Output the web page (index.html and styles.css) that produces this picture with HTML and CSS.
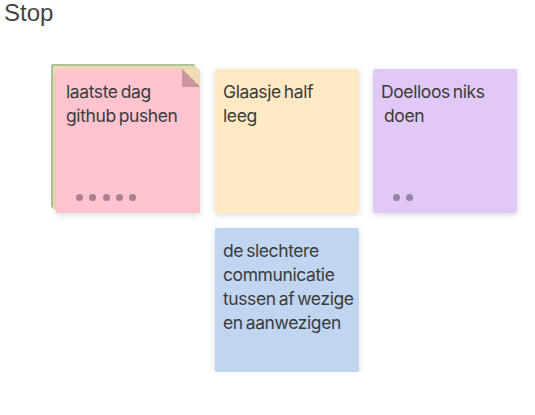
FILE: index.html
```html
<!DOCTYPE html>
<html lang="en">
<head>
    <meta charset="UTF-8">
    <meta name="viewport" content="width=device-width, initial-scale=1.0">
    <title>Retro - Stop</title>
    <link rel="stylesheet" href="styles.css">
</head>
<body>
    <h1 class="column-title">Stop</h1>
    <div class="board">
        <!-- stacked note: several votes merged into one -->
        <div class="note-stack cell-1">
            <div class="layer layer-green"></div>
            <div class="layer layer-beige"></div>
            <div class="note note-pink folded">
                <p>laatste dag<br>github pushen</p>
                <div class="votes">
                    <span></span><span></span><span></span><span></span><span></span>
                </div>
            </div>
        </div>
        <div class="note note-yellow cell-2">
            <p>Glaasje half<br>leeg</p>
        </div>
        <div class="note note-purple cell-3">
            <p>Doelloos niks<br>&nbsp;doen</p>
            <div class="votes">
                <span></span><span></span>
            </div>
        </div>
        <div class="note note-blue cell-5">
            <p>de slechtere<br>communicatie<br>tussen af wezige<br>en aanwezigen</p>
        </div>
    </div>
</body>
</html>
```

FILE: styles.css
```css
body {
    margin: 0;
    padding: 0;
    background: #fff;
    font-family: Inter, "Liberation Sans", sans-serif;
}

.column-title {
    margin: 0;
    padding: 0 0 0 4px;
    font-family: "Liberation Sans", Arial, sans-serif;
    font-weight: normal;
    font-size: 24px;
    line-height: 26px;
    color: #444;
}

.board {
    display: grid;
    grid-template-columns: repeat(3, 144px);
    grid-auto-rows: 144px;
    column-gap: 14px;
    row-gap: 15px;
    padding: 43px 0 0 57px;
}

.cell-1 { grid-column: 1; grid-row: 1; }
.cell-2 { grid-column: 2; grid-row: 1; }
.cell-3 { grid-column: 3; grid-row: 1; }
.cell-5 { grid-column: 2; grid-row: 2; }

.note {
    position: relative;
    box-sizing: border-box;
    width: 144px;
    height: 144px;
    padding: 11px 6px 9px 8px;
    border-radius: 2px;
    box-shadow: 0 2px 6px rgba(0, 0, 0, 0.14);
    color: #3b3b3b;
}

.note p {
    margin: 0;
    font-size: 17.5px;
    line-height: 24px;
    letter-spacing: -0.4px;
    word-spacing: -1.5px;
    white-space: nowrap;
}

.note-pink { background: #ffc4d0; }
.note-yellow { background: #ffeac4; }
.note-purple { background: #e2c8f6; }
.note-blue { background: #c0d5ef; }

.note-stack {
    position: relative;
}

.note-stack .note {
    margin: 0 0 0 -1px;
    padding-left: 10px;
}

.layer {
    position: absolute;
    width: 144px;
    height: 144px;
    border-radius: 2px;
}

.layer-green {
    left: -6px;
    top: -5px;
    background: #a9c49c;
}

.layer-beige {
    left: -4px;
    top: -3px;
    background: #f2dcb6;
}

/* dog-ear in the top right corner */
.folded::after {
    content: "";
    position: absolute;
    top: 0;
    right: 0;
    width: 18px;
    height: 18px;
    background: linear-gradient(to bottom left, #f2dcb6 50%, #c9969f 50%);
}

.votes {
    position: absolute;
    left: 20px;
    bottom: 12px;
    display: flex;
    gap: 6.3px;
}

.votes span {
    width: 7px;
    height: 7px;
    border-radius: 50%;
    background: rgba(60, 50, 60, 0.45);
}
```
